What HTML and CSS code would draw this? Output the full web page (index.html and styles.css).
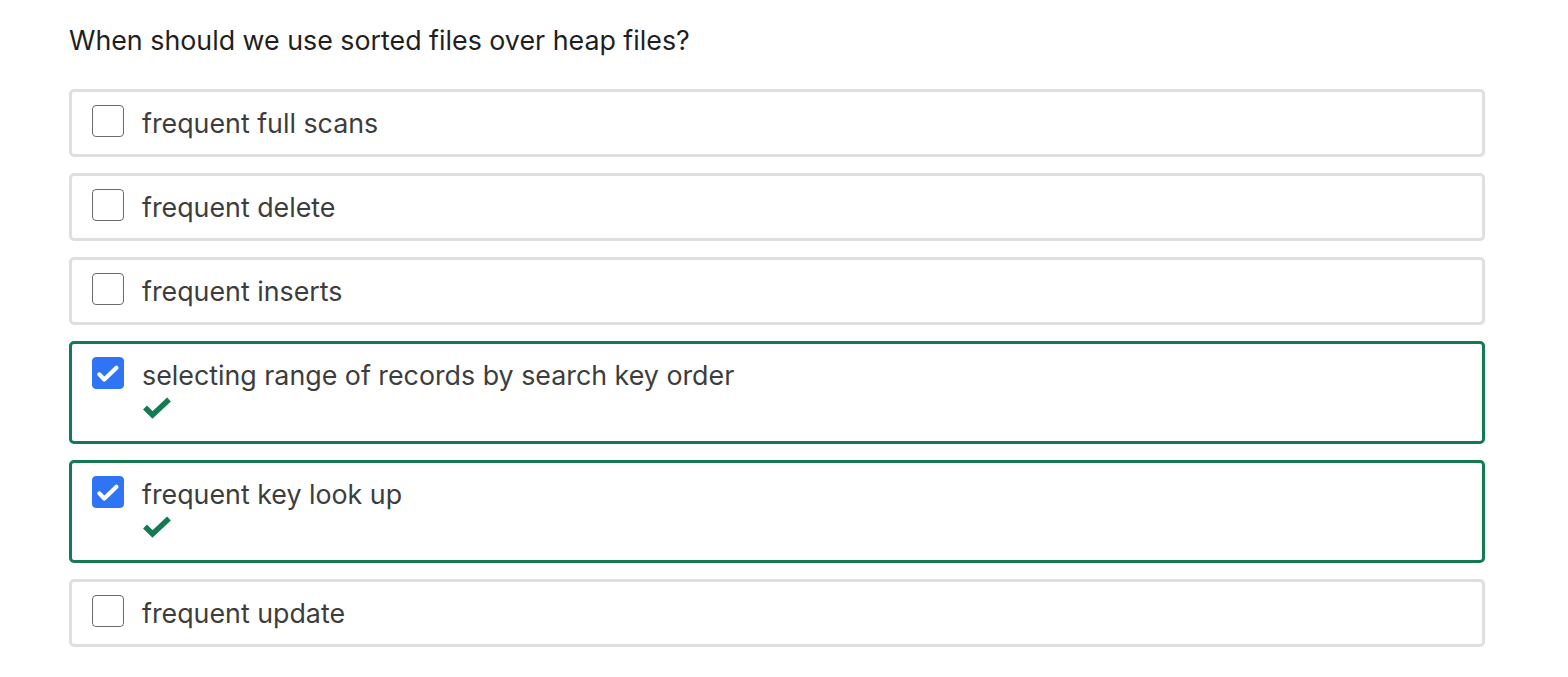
FILE: index.html
```html
<!DOCTYPE html>
<html>
<head>
<meta charset="utf-8">
<link rel="stylesheet" href="styles.css">
</head>
<body>
<div class="quiz">
  <p class="question">When should we use sorted files over heap files?</p>
  <div class="options">
    <div class="option">
      <span class="box"></span>
      <div class="label"><span class="text">frequent full scans</span></div>
    </div>
    <div class="option">
      <span class="box"></span>
      <div class="label"><span class="text">frequent delete</span></div>
    </div>
    <div class="option">
      <span class="box"></span>
      <div class="label"><span class="text">frequent inserts</span></div>
    </div>
    <div class="option correct">
      <span class="box checked"><svg viewBox="0 0 32 32" width="32" height="32"><path d="M6.8 17.5 L12 23 L25 10.5" fill="none" stroke="#fff" stroke-width="4.5" stroke-linecap="round" stroke-linejoin="round"/></svg></span>
      <div class="label"><span class="text">selecting range of records by search key order</span>
        <svg class="tick" viewBox="0 0 28 22" width="28" height="22"><path d="M2 10.5 L9.5 18 L26 2.5" fill="none" stroke="#147a52" stroke-width="5.5" stroke-linejoin="miter"/></svg>
      </div>
    </div>
    <div class="option correct">
      <span class="box checked"><svg viewBox="0 0 32 32" width="32" height="32"><path d="M6.8 17.5 L12 23 L25 10.5" fill="none" stroke="#fff" stroke-width="4.5" stroke-linecap="round" stroke-linejoin="round"/></svg></span>
      <div class="label"><span class="text">frequent key look up</span>
        <svg class="tick" viewBox="0 0 28 22" width="28" height="22"><path d="M2 10.5 L9.5 18 L26 2.5" fill="none" stroke="#147a52" stroke-width="5.5" stroke-linejoin="miter"/></svg>
      </div>
    </div>
    <div class="option">
      <span class="box"></span>
      <div class="label"><span class="text">frequent update</span></div>
    </div>
  </div>
</div>
</body>
</html>
```
FILE: styles.css
```css
* { box-sizing: border-box; }
html, body { margin: 0; padding: 0; background: #fff; }
body { font-family: Inter, "Noto Sans", sans-serif; color: #3a3a3a; }
.quiz { padding: 22px 83px 0 69px; }
.question { margin: 0 0 31px; font-size: 26.8px; line-height: 36px; color: #1f1f1f; }
.options { display: flex; flex-direction: column; gap: 16px; }
.option {
  display: flex; align-items: flex-start; gap: 18px;
  border: 3px solid #dfdfdf; border-radius: 5px;
  padding: 13px 20px 13px 20px;
}
.option.correct { border-color: #147a52; padding-bottom: 22px; }
.box {
  flex: none; width: 32px; height: 32px; border: 1.5px solid #6b6b6b; border-radius: 4px;
  display: flex; align-items: center; justify-content: center; background: #fff;
}
.box.checked { background: #2f74f5; border-color: #2f74f5; }
.box svg { display: block; }
.label { display: flex; flex-direction: column; }
.text { font-size: 26.8px; line-height: 36px; color: #3d3d3d; }
.tick { display: block; margin-top: 4px; margin-left: 1px; }
```
